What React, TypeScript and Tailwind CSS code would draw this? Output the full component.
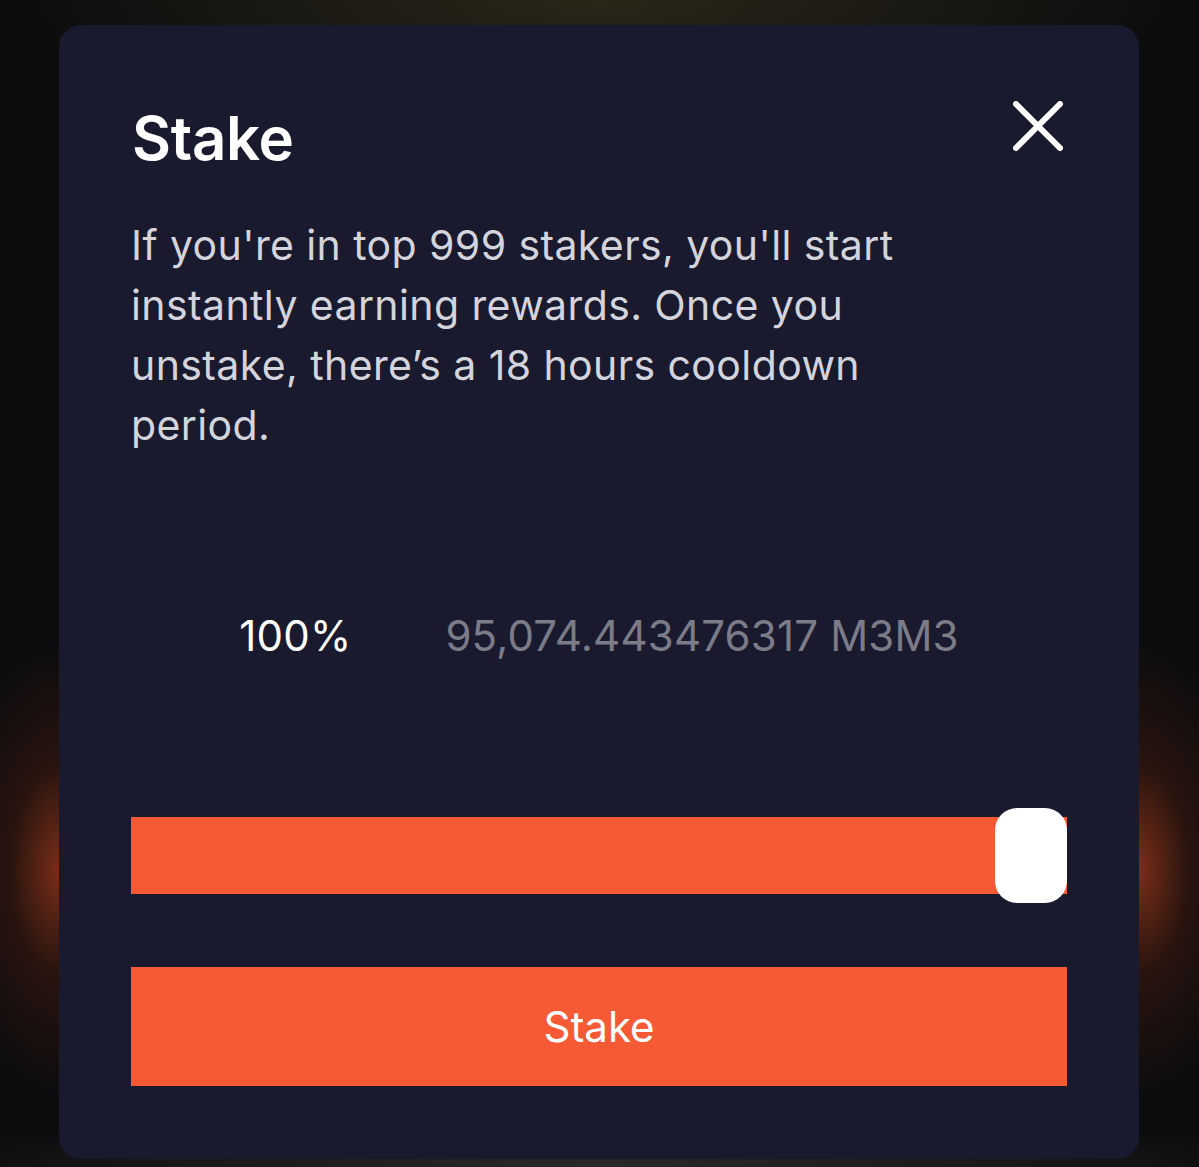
import React from "react";

export default function App() {
  return (
    <div className="relative w-[1199px] h-[1167px] overflow-hidden bg-[#0c0c0e]">
      {/* background glows */}
      <div className="absolute inset-0 bg-[radial-gradient(ellipse_600px_120px_at_50%_0%,#2a2718_0%,rgba(20,20,16,0)_100%)]" />
      <div className="absolute inset-0 bg-[radial-gradient(ellipse_110px_230px_at_60px_870px,#7a2e18_0%,rgba(60,25,15,0.6)_45%,rgba(12,12,14,0)_100%)]" />
      <div className="absolute inset-0 bg-[radial-gradient(ellipse_110px_230px_at_1139px_870px,#7a2e18_0%,rgba(60,25,15,0.6)_45%,rgba(12,12,14,0)_100%)]" />
      <div className="absolute inset-0 bg-[radial-gradient(ellipse_700px_60px_at_50%_1167px,#2a2a2c_0%,rgba(12,12,14,0)_100%)]" />

      <div className="relative pt-[25px] pl-[59px]">
        <div className="w-[1080px] h-[1134px] rounded-[22px] bg-[#1a1a2e] pl-[72px] pr-[72px] pt-[84px] flex flex-col font-['Inter',sans-serif]">
          <div className="flex items-start justify-between">
            <h1 className="text-[60px] leading-[58px] font-semibold text-white tracking-[-0.3px] pl-[1px]">Stake</h1>
            <button className="mt-[-8px] mr-[4px] w-[50px] h-[50px] flex items-center justify-center">
              <svg width="50" height="50" viewBox="0 0 50 50" fill="none">
                <path d="M3 3L47 47M47 3L3 47" stroke="white" strokeWidth="6" strokeLinecap="round" />
              </svg>
            </button>
          </div>

          <p className="mt-[48px] text-[41px] leading-[60px] text-[#d4d4dc] w-[800px] tracking-[0.4px]">
            If you're in top 999 stakers, you'll start instantly earning rewards. Once you unstake, there’s a 18 hours cooldown period.
          </p>

          <div className="mt-[156px] flex items-center justify-center gap-[94px] text-[42px] leading-[50px] tracking-[0.2px]">
            <span className="text-white">100%</span>
            <span className="text-[#7c7c88]">95,074.443476317 M3M3</span>
          </div>

          <div className="mt-[156px] relative h-[77px] bg-[#f65a34]">
            <div className="absolute right-0 top-[-9px] w-[72px] h-[95px] bg-white rounded-[22px]" />
          </div>

          <button className="mt-[73px] h-[119px] bg-[#f65a34] text-white text-[42px] flex items-center justify-center">
            Stake
          </button>
        </div>
      </div>
    </div>
  );
}
